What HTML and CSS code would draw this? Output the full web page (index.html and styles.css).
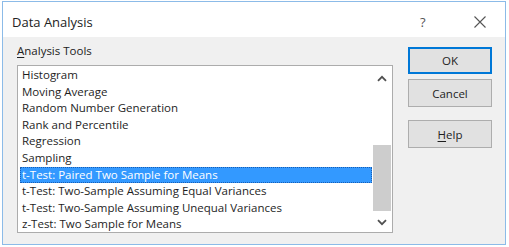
FILE: index.html
```html
<!DOCTYPE html>
<html lang="en">
<head>
    <meta charset="UTF-8">
    <title>Data Analysis</title>
    <link rel="stylesheet" href="styles.css">
</head>
<body>
    <div class="dialog">
        <div class="titlebar">
            <span class="title">Data Analysis</span>
            <span class="help-btn">?</span>
            <svg class="close-btn" width="12" height="12" viewBox="0 0 12 12">
                <path d="M0.5 0.5 L11.5 11.5 M11.5 0.5 L0.5 11.5" stroke="#555" stroke-width="1.1" fill="none"/>
            </svg>
        </div>

        <div class="content">
            <div class="tools">
                <div class="label"><u>A</u>nalysis Tools</div>
                <div class="listbox">
                    <ul class="items">
                        <li>Histogram</li>
                        <li>Moving Average</li>
                        <li>Random Number Generation</li>
                        <li>Rank and Percentile</li>
                        <li>Regression</li>
                        <li>Sampling</li>
                        <li class="selected">t-Test: Paired Two Sample for Means</li>
                        <li>t-Test: Two-Sample Assuming Equal Variances</li>
                        <li>t-Test: Two-Sample Assuming Unequal Variances</li>
                        <li>z-Test: Two Sample for Means</li>
                    </ul>
                    <div class="scrollbar">
                        <svg class="arrow" width="10" height="7" viewBox="0 0 10 7">
                            <path d="M1 5.8 L5 1.8 L9 5.8" stroke="#505050" stroke-width="1.8" fill="none"/>
                        </svg>
                        <div class="track">
                            <div class="thumb"></div>
                        </div>
                        <svg class="arrow" width="10" height="7" viewBox="0 0 10 7">
                            <path d="M1 1.2 L5 5.2 L9 1.2" stroke="#505050" stroke-width="1.8" fill="none"/>
                        </svg>
                    </div>
                </div>
            </div>

            <div class="buttons">
                <button class="btn default">OK</button>
                <button class="btn">Cancel</button>
                <button class="btn help"><u>H</u>elp</button>
            </div>
        </div>
    </div>
</body>
</html>
```

FILE: styles.css
```css
body {
    margin: 0;
    padding: 0;
    background: #ffffff;
    font-family: "Open Sans", "Noto Sans", sans-serif;
    font-size: 11.5px;
    color: #1e1e1e;
}
.dialog {
    margin: 1px 3px 0 2px;
    height: 242px;
    border: 1px solid #8cbbe8;
    background: #f0f0f0;
    display: flex;
    flex-direction: column;
}
.titlebar {
    height: 35px;
    background: #ffffff;
    display: flex;
    align-items: center;
    position: relative;
}
.title {
    margin-left: 9px;
    margin-top: 5px;
    font-size: 13px;
    color: #222;
}
.help-btn {
    position: absolute;
    left: 417px;
    top: 11px;
    font-size: 13px;
    color: #555;
}
.close-btn {
    position: absolute;
    left: 471px;
    top: 14px;
}
.content {
    flex: 1;
    display: flex;
    justify-content: space-between;
}
.tools {
    margin-left: 14px;
    padding-top: 7px;
}
.label {
    height: 21px;
    line-height: 14px;
    color: #222;
}
.label u, .help u {
    text-decoration-thickness: 1px;
    text-underline-offset: 2px;
}
.listbox {
    width: 374px;
    height: 166px;
    border: 1px solid #acacac;
    background: #ffffff;
    display: flex;
    overflow: hidden;
}
.items {
    flex: 1;
    list-style: none;
    margin: 1px 0 0 2px;
    padding: 0;
    overflow: hidden;
}
.items li {
    height: 16.6px;
    line-height: 16.6px;
    padding-left: 2px;
    white-space: nowrap;
}
.items li.selected {
    background: #3399ff;
    color: #ffffff;
    outline: 1px dotted #1a5fb4;
    outline-offset: -1px;
}
.scrollbar {
    width: 20px;
    display: flex;
    flex-direction: column;
    align-items: center;
    padding-top: 9px;
    padding-bottom: 6px;
}
.arrow {
    flex-shrink: 0;
}
.track {
    flex: 1;
    width: 18px;
    padding-top: 63px;
    padding-bottom: 8px;
    display: flex;
    flex-direction: column;
}
.thumb {
    flex: 1;
    background: #cdcdcd;
}
.buttons {
    width: 84px;
    margin-right: 13px;
    padding-top: 10px;
    display: flex;
    flex-direction: column;
}
.btn {
    height: 28px;
    margin-bottom: 5px;
    background: #e1e1e1;
    border: 1px solid #adadad;
    font-family: inherit;
    font-size: 11.5px;
    color: #1e1e1e;
    padding: 0;
}
.btn.default {
    height: 27px;
    border: 2px solid #0078d7;
    margin-bottom: 5px;
}
.btn.help {
    margin-top: 8px;
}
```
